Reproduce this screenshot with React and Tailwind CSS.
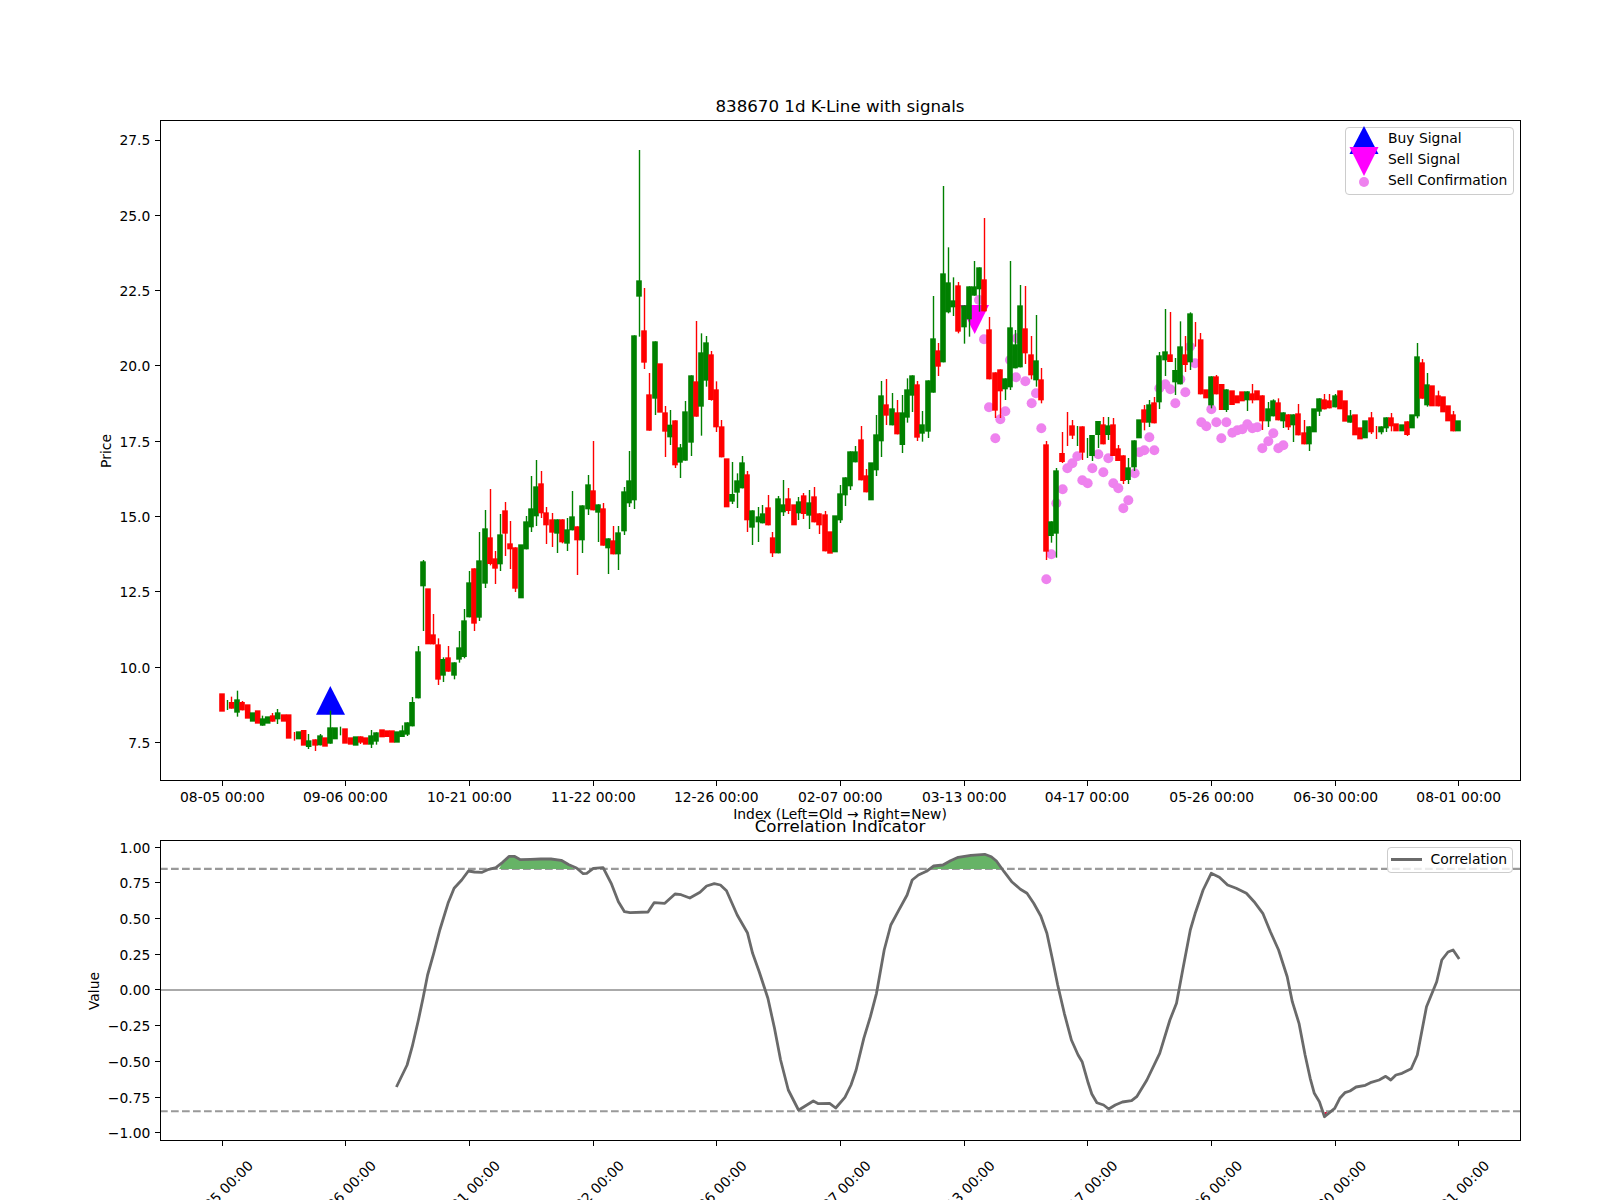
import React from 'react';

// candle rows are read from zoomed crops: [colour, x, bodyTop, bodyBottom, wickTop, wickBottom], in 3x crop pixels
const crops = [
  [200, 440, [
    ['r', 66, 760, 815], ['g', 82, null, null, 780, 810], ['r', 95, 786, 806, 770], ['g', 111, 778, 818, 752, 830],
    ['r', 126, 786, 811, 783], ['r', 143, 793, 836], ['g', 158, 817, 845], ['r', 173, 811, 851],
    ['g', 188, 835, 857, 827], ['g', 203, 829, 851], ['r', 218, 826, 845, 819], ['g', 233, 817, 838, 807, 852],
    ['r', 251, 823, 845], ['r', 266, 823, 896], ['r', 283, null, null, 876, 902], ['g', 296, 874, 898],
    ['r', 311, 870, 917], ['g', 326, 901, 921, 882, 927], ['r', 345, 898, 917, null, 933], ['g', 360, 886, 916, 882],
    ['r', 375, 892, 920], ['g', 390, 862, 911, 812], ['g', 405, 862, 898], ['g', 421, null, null, 860, 886],
    ['r', 435, 865, 911], ['r', 452, 892, 914], ['g', 467, 889, 917], ['r', 482, 889, 908, null, 912],
    ['r', 497, 892, 914], ['g', 513, 886, 914, 870, 924], ['g', 528, 877, 905, null, 914], ['r', 546, 868, 892],
    ['r', 561, 871, 891], ['r', 576, 871, 908], ['g', 591, 874, 908], ['g', 606, 871, 891, 856],
    ['g', 621, 847, 884, null, 888], ['g', 636, 786, 859, 771], ['g', 654, 634, 775, 618], ['g', 669, 364, 439, 360, 573],
    ['r', 684, 445, 613], ['r', 699, 583, 613, 522], ['r', 714, 613, 719, 595, 735], ['g', 729, 657, 707, 652, 726],
    ['r', 744, 652, 695, 618], ['g', 762, 667, 707, null, 718], ['g', 777, 622, 659, 573, 668], ['g', 792, 541, 651, 507, 655],
    ['g', 807, 427, 532, 393], ['r', 822, 385, 551, null, 573], ['g', 837, 361, 533, 276, 543], ['g', 855, 265, 431, 210, 444],
    ['r', 870, 292, 372, 147, 376], ['r', 885, 355, 386, 333, 432],
  ]],
  [420, 400, [
    ['g', 240, 403, 493, 342, 513], ['r', 255, 331, 401, 306, 468], ['r', 270, 430, 448, 363, 507], ['r', 285, 442, 566, null, 576],
    ['g', 303, 433, 595], ['g', 318, 364, 448, 348], ['g', 333, 325, 382, 228, 396], ['g', 348, 259, 349, 180, 378],
    ['r', 363, 250, 340, 213, 354], ['r', 378, 337, 376, 321, 432], ['r', 396, 358, 398, 339, 441], ['g', 411, 358, 401, null, 459],
    ['r', 426, 358, 427, null, 430], ['g', 441, 388, 431, 354, 453], ['g', 456, 349, 391, 273], ['r', 471, 379, 421, null, 525],
    ['g', 486, 316, 421, null, 459], ['g', 504, 253, 328, 225, 345], ['r', 519, 271, 331, 123], ['g', 534, 313, 338, null, 426],
    ['r', 549, 325, 437, 309], ['g', 564, 415, 445, null, 522], ['r', 579, 421, 463, 378], ['g', 594, 397, 463, 378, 510],
    ['g', 612, 274, 394, 261, 405], ['g', 627, 241, 310, 153, 321], ['g', 642, -194, 301, null, 327],
  ]],
  [420, 130, [
    ['g', 657, 451, 500, 60, 620], ['r', 672, 601, 698, 474, 717], ['r', 687, 793, 902, 729], ['g', 705, 634, 806, null, 855],
    ['r', 720, 700, 848], ['r', 735, 847, 905, 828, 981], ['g', 750, 884, 922, 840, 945], ['r', 765, 871, 1006, null, 1014],
    ['g', 780, 952, 998, 942, 1044], ['g', 795, 844, 992, 813], ['g', 813, 736, 938, null, 978], ['r', 828, 754, 860, 573],
    ['g', 843, 667, 830, 610, 917], ['g', 858, 637, 752, 618, 770], ['r', 873, 673, 810, 663, 812], ['r', 888, 778, 892, 754, 906],
  ]],
  [700, 330, [
    ['r', 65, 289, 382, 270], ['r', 80, 385, 532], ['g', 96, 492, 515, 396, 522], ['g', 111, 451, 488, 430, 534],
    ['g', 126, 397, 475, 378], ['r', 141, 433, 571, 423, 606], ['g', 156, 541, 593, null, 645], ['g', 175, 559, 577, 531, 636],
    ['g', 188, 550, 580, 525], ['r', 204, 532, 586, 495], ['r', 218, 622, 670, 606, 681], ['g', 234, 505, 670, 498],
    ['g', 249, 523, 547, 450, 558], ['r', 264, 505, 543, 474, 552], ['r', 282, 523, 586], ['g', 296, 514, 550, 501, 570],
    ['r', 311, 496, 552, 489, 567], ['g', 327, 517, 557, 480, 597], ['r', 342, 499, 577, 471], ['r', 357, 550, 586, null, 612],
    ['r', 375, 553, 664, 543], ['r', 390, 604, 671], ['g', 405, 556, 667], ['g', 420, 490, 571, 465, 579],
    ['g', 435, 442, 496, null, 528], ['g', 450, 364, 469, null, 480], ['g', 465, 364, 397, 348], ['r', 483, 328, 451, 288],
    ['r', 498, 436, 487, 417], ['g', 513, 397, 511], ['g', 528, 313, 421, 255, 438], ['g', 543, 196, 334, 153, 381],
    ['r', 558, 223, 257, 147, 285], ['g', 576, 235, 286, 189], ['r', 591, 247, 313, 210],
  ]],
  [900, 170, [
    ['g', 7, 727, 825, 675, 849], ['g', 21, 658, 743, 625, 758], ['g', 36, 616, 677, null, 726], ['r', 51, 643, 803, 633, 813],
    ['g', 66, 763, 791, 723, 815], ['g', 84, 631, 785, null, 804], ['g', 99, 505, 668, 378], ['r', 114, 541, 590, 519, 618],
    ['g', 129, 310, 577, 48], ['g', 144, 337, 427, 232, 430], ['g', 159, 391, 412, 322, 438], ['r', 174, 346, 485, 336, 490],
    ['g', 192, 406, 472, null, 521], ['g', 207, 349, 448, null, 500], ['g', 222, 349, 377, 273], ['g', 237, 292, 358, null, 425],
    ['r', 252, 328, 424, 144], ['r', 267, 478, 628, 441], ['r', 285, 607, 722, null, 744], ['r', 300, 598, 664, null, 744],
    ['g', 315, 625, 658, null, 690], ['g', 330, 472, 652, 273, 660], ['g', 345, 523, 595, 480], ['g', 360, 406, 592, 345],
    ['r', 375, 475, 550, 348, 582], ['r', 393, 553, 616, 498, 628], ['g', 408, 571, 631, 435, 650], ['r', 423, 628, 691, 594, 700],
  ]],
  [1020, 280, [
    ['r', 78, 493, 815, 483, 840], ['g', 93, 724, 768, null, 788], ['g', 108, 571, 761, 564, 833], ['r', 126, 519, 546, 456, 549],
    ['r', 142, null, null, 396, 498], ['r', 156, 436, 467, 420, 477], ['g', 171, null, null, 438, 498], ['r', 186, 439, 518, null, 540],
    ['g', 202, null, null, 474, 534], ['g', 216, 465, 528, null, 543], ['g', 234, 423, 465, null, 504], ['r', 249, 433, 493, 411],
    ['g', 264, 436, 465, 411, 480], ['r', 279, 433, 528, 414], ['r', 294, 505, 543, 495], ['r', 309, 526, 603, null, 612],
    ['g', 324, 562, 600, 534, 612], ['g', 342, 481, 562, null, 573], ['g', 357, 418, 475], ['r', 372, 388, 428, 375, 451],
    ['g', 387, 373, 428, 360, 441], ['r', 402, 367, 430, 351], ['g', 417, 226, 367, 216, 387], ['g', 435, 214, 241, 87, 288],
    ['r', 450, 223, 246, 96], ['g', 465, 270, 307, 234, 345], ['g', 480, 199, 313, 124], ['r', 495, 223, 255, 168, 276],
    ['g', 510, 100, 247, 97, 270], ['r', 525, null, null, 126, 200], ['r', 542, 178, 343, 159], ['r', 558, 328, 355],
    ['g', 573, 289, 376, null, 385], ['r', 588, 289, 343, 285],
  ]],
  [1220, 110, [
    ['r', 5, 822, 900], ['g', 18, 838, 900, null, 906], ['r', 36, 841, 885], ['r', 51, 856, 880], ['r', 66, 844, 874],
    ['g', 81, 844, 871, null, 903], ['r', 96, 850, 871, 822, 880], ['r', 111, 841, 871], ['r', 126, 856, 934, null, 960],
    ['g', 144, 895, 934, 876, 951], ['g', 159, 871, 919, 868], ['r', 174, 877, 931, 865], ['g', 189, 907, 934, null, 954],
    ['r', 204, 913, 952, null, 960], ['g', 219, 913, 946, null, 996], ['r', 234, 910, 976, 882], ['r', 252, 967, 1003, 930],
    ['g', 267, 949, 1003, null, 1023], ['g', 282, 895, 967], ['g', 297, 865, 905, null, 918], ['r', 312, 868, 898, 852],
    ['r', 327, 871, 895, 852], ['g', 345, 856, 892, 852], ['r', 360, 841, 898], ['r', 375, 871, 935], ['g', 390, 916, 938, 900],
    ['r', 405, 913, 976], ['r', 420, 952, 988], ['g', 435, 931, 985], ['r', 453, 922, 967, 906, 972],
    ['r', 468, null, null, 948, 987], ['g', 483, 949, 967, null, 973], ['g', 498, 922, 955, null, 966], ['r', 513, 922, 949, 909, 964],
    ['r', 528, 940, 964], ['g', 546, 943, 964], ['r', 561, 934, 975, null, 978], ['g', 576, 913, 955], ['g', 591, 739, 919, 699, 925],
    ['r', 606, 757, 866, 747], ['g', 621, 823, 886, 789, 890], ['r', 636, 826, 889], ['r', 654, 856, 889, 842], ['r', 669, 859, 907],
    ['r', 684, 886, 934], ['r', 699, 913, 964, 903], ['g', 714, 931, 964],
  ]],
];

const candles = crops.flatMap(([ox, oy, rows]) =>
  rows.map(([c, x, top, bottom, wickTop, wickBottom]) => ({
    color: c === 'r' ? '#ff0000' : '#008000',
    x: ox + x / 3,
    top: top == null ? null : oy + top / 3,
    bottom: bottom == null ? null : oy + bottom / 3,
    wickTop: wickTop == null ? null : oy + wickTop / 3,
    wickBottom: wickBottom == null ? null : oy + wickBottom / 3,
  }))
);

const confirmCrops = [
  [900, 170, [
    [237, 390], [252, 508], [267, 712], [301, 748], [286, 805], [316, 724], [330, 570], [350, 505], [348, 622], [376, 634],
    [395, 700], [408, 670], [424, 775],
  ]],
  [1020, 280, [
    [79, 898], [94, 823], [109, 670], [128, 628], [142, 565], [157, 550], [172, 529], [187, 601], [203, 610], [217, 565],
    [235, 523], [250, 577], [265, 535], [280, 610], [295, 625], [310, 685], [325, 661], [344, 580], [358, 517], [373, 511],
    [388, 472], [403, 511], [418, 325], [436, 313], [451, 328], [466, 370], [481, 298], [496, 337], [510, 200], [525, 250],
    [544, 427], [559, 439], [574, 388], [589, 427], [604, 475], [619, 427], [637, 458], [652, 451], [667, 448], [682, 433],
    [697, 445], [712, 442],
  ]],
  [1220, 110, [[127, 1015], [145, 994], [160, 970], [175, 1015], [190, 1006]]],
];
const confirms = confirmCrops.flatMap(([ox, oy, rows]) => rows.map(([x, y]) => [ox + x / 3, oy + y / 3]));

const fromLeft = (x, y) => [x / 1.96, 780 + y / 3];
const fromRight = (x, y) => [800 + x / 1.96, 780 + y / 3];
const toPoints = (list) => list.map(([x, y]) => `${x.toFixed(1)},${y.toFixed(1)}`).join(' ');
const snap = (v) => Math.floor(v) + 0.5;

const corrLeft = [
  [777, 921], [798, 855], [808, 800], [820, 720], [829, 655], [838, 585], [850, 520], [862, 450], [878, 370], [890, 325],
  [905, 300], [918, 273], [930, 276], [945, 277], [958, 268], [972, 263], [985, 247], [998, 229], [1008, 229], [1020, 239],
  [1040, 238], [1060, 237], [1080, 237], [1100, 241], [1115, 254], [1130, 264], [1143, 281], [1150, 280], [1163, 265],
  [1182, 263], [1198, 310], [1212, 365], [1224, 395], [1235, 398], [1270, 396], [1282, 368], [1303, 370], [1323, 342],
  [1335, 344], [1352, 354], [1372, 337], [1385, 318], [1400, 311], [1412, 315], [1424, 332], [1445, 405], [1465, 458],
  [1475, 520], [1488, 575], [1505, 655], [1518, 745], [1530, 840], [1545, 930], [1565, 990],
];
const corrRight = [
  [0, 988], [26, 963], [36, 971], [58, 970], [70, 984], [88, 952], [100, 915], [110, 870], [125, 775], [138, 710], [150, 640],
  [165, 510], [178, 435], [192, 395], [210, 345], [220, 300], [232, 285], [248, 274], [262, 258], [280, 255], [295, 242],
  [310, 232], [335, 226], [362, 223], [375, 230], [385, 243], [400, 275], [415, 305], [432, 328], [445, 340], [458, 370],
  [472, 408], [484, 460], [495, 540], [505, 615], [518, 700], [532, 780], [545, 825], [553, 845], [565, 910], [572, 942],
  [582, 968], [595, 975], [605, 987], [618, 975], [632, 966], [650, 962], [660, 950], [680, 900], [705, 820], [725, 720],
  [738, 670], [750, 570], [765, 450], [775, 398], [790, 330], [806, 280], [822, 292], [838, 315], [855, 325], [875, 340],
  [890, 365], [907, 400], [922, 455], [938, 510], [955, 590], [965, 665], [978, 730], [990, 825], [1000, 895], [1008, 940],
  [1018, 965], [1028, 1010], [1048, 985], [1058, 955], [1068, 938], [1078, 933], [1090, 921], [1108, 916], [1118, 908],
  [1135, 900], [1148, 889], [1158, 900], [1168, 885], [1180, 880], [1198, 866], [1210, 825], [1228, 680], [1248, 605],
  [1258, 540], [1270, 516], [1280, 510], [1292, 537],
];
const corrLine = [...corrLeft.map(([x, y]) => fromLeft(x, y)), ...corrRight.map(([x, y]) => fromRight(x, y))];

const fillOne = [[978, 267], [985, 247], [998, 229], [1008, 229], [1020, 239], [1040, 238], [1060, 237], [1080, 237], [1100, 241], [1115, 254], [1125, 267]].map(([x, y]) => fromLeft(x, y));
const fillTwo = [[250, 267], [262, 258], [280, 255], [295, 242], [310, 232], [335, 226], [362, 223], [375, 230], [385, 243], [395, 267]].map(([x, y]) => fromRight(x, y));

const xTicks = [
  [222.4, '08-05 00:00'], [345.4, '09-06 00:00'], [469.4, '10-21 00:00'], [593.4, '11-22 00:00'], [716.3, '12-26 00:00'],
  [840.3, '02-07 00:00'], [964.3, '03-13 00:00'], [1087, '04-17 00:00'], [1211.7, '05-26 00:00'], [1335.7, '06-30 00:00'], [1458.7, '08-01 00:00'],
];
const priceTicks = ['27.5', '25.0', '22.5', '20.0', '17.5', '15.0', '12.5', '10.0', '7.5'];
const corrTicks = ['1.00', '0.75', '0.50', '0.25', '0.00', '−0.25', '−0.50', '−0.75', '−1.00'];

const Tick = ({ x1, x2, y1, y2 }) => <line x1={x1} x2={x2} y1={y1} y2={y2} stroke="#000" strokeWidth="1" shapeRendering="crispEdges" />;

const PriceChart = () => (
  <svg width="1600" height="840" viewBox="0 0 1600 840" className="block shrink-0">
    <text x="840" y="111.7" textAnchor="middle" className="text-[16.67px]">838670 1d K-Line with signals</text>
    <polygon points="316,714.7 345,714.7 330.3,686" fill="#0000ff" />
    <polygon points="960,305 989,305 974.7,334" fill="#ff00ff" />
    {confirms.map(([x, y], i) => (
      <circle key={i} cx={x} cy={y} r="5" fill="#ee82ee" />
    ))}
    {candles.map((c, i) => (
      <g key={i} fill={c.color}>
        {(c.wickTop != null || c.wickBottom != null) && (
          <rect
            x={snap(c.x) - 0.7}
            width="1.4"
            y={c.wickTop ?? c.top}
            height={(c.wickBottom ?? c.bottom) - (c.wickTop ?? c.top)}
          />
        )}
        {c.top != null && <rect x={c.x - 2.8} width="5.6" y={c.top} height={c.bottom - c.top} />}
      </g>
    ))}
    <rect x="160.5" y="120.5" width="1360" height="660" fill="none" stroke="#000" strokeWidth="1" shapeRendering="crispEdges" />
    {priceTicks.map((t, i) => {
      const y = 140 + i * 75.3;
      return (
        <g key={t}>
          <Tick x1="155" x2="160" y1={snap(y)} y2={snap(y)} />
          <text x="150.3" y={y + 5.4} textAnchor="end">{t}</text>
        </g>
      );
    })}
    {xTicks.map(([x, t]) => (
      <g key={t}>
        <Tick x1={snap(x)} x2={snap(x)} y1="781" y2="786" />
        <text x={x} y="802" textAnchor="middle">{t}</text>
      </g>
    ))}
    <text x="840" y="819" textAnchor="middle">Index (Left=Old → Right=New)</text>
    <text transform="translate(111 451) rotate(-90)" textAnchor="middle">Price</text>
  </svg>
);

const CorrelationChart = () => (
  <svg width="1600" height="360" viewBox="0 840 1600 360" className="block shrink-0 overflow-visible">
    <text x="840" y="831.7" textAnchor="middle" className="text-[16.67px]">Correlation Indicator</text>
    <line x1="160" x2="1520" y1="990" y2="990" stroke="#aaaaaa" strokeWidth="2.1" />
    <line x1="160" x2="1520" y1="868.9" y2="868.9" stroke="#999999" strokeWidth="2.08" strokeDasharray="7.7 3.3" />
    <line x1="160" x2="1520" y1="1111.2" y2="1111.2" stroke="#999999" strokeWidth="2.08" strokeDasharray="7.7 3.3" />
    <polygon points={toPoints(fillOne)} fill="#66b366" />
    <polygon points={toPoints(fillTwo)} fill="#66b366" />
    <polygon points="1324.4,1112 1327,1112 1325.4,1116" fill="#e0103a" />
    <polyline points={toPoints(corrLine)} fill="none" stroke="#6a6a6a" strokeWidth="2.8" strokeLinejoin="round" />
    <rect x="160.5" y="840.5" width="1360" height="300" fill="none" stroke="#000" strokeWidth="1" shapeRendering="crispEdges" />
    {corrTicks.map((t, i) => {
      const y = 847.1 + i * 35.72;
      return (
        <g key={t}>
          <Tick x1="155" x2="160" y1={snap(y)} y2={snap(y)} />
          <text x="150.3" y={y + 5.4} textAnchor="end">{t}</text>
        </g>
      );
    })}
    {xTicks.map(([x, t]) => (
      <g key={t}>
        <Tick x1={snap(x)} x2={snap(x)} y1="1141" y2="1146" />
        <text transform={`translate(${x - 2} 1193) rotate(-45)`} y="5" textAnchor="middle">{t}</text>
      </g>
    ))}
    <text transform="translate(99 991) rotate(-90)" textAnchor="middle">Value</text>
  </svg>
);

const App = () => (
  <div className="relative flex h-[1200px] w-[1600px] flex-col overflow-hidden bg-white font-['DejaVu_Sans',sans-serif] text-[13.89px] text-black">
    <PriceChart />
    <CorrelationChart />

    <div className="absolute left-[1344.5px] top-[126.5px] flex h-[68px] w-[169.5px] flex-col rounded-[4px] border border-[#cccccc] bg-white/80 pl-[42.5px] pt-[0.5px] leading-[20.8px]">
      <svg width="30" height="60" viewBox="0 0 30 60" className="absolute left-[3px] top-[-1.5px] overflow-visible">
        <polygon points="0.5,28 29.5,28 15,0" fill="#0000ff" />
        <polygon points="0.5,21 29.5,21 15,50" fill="#ff00ff" />
        <circle cx="15" cy="56" r="5" fill="#ee82ee" />
      </svg>
      <span>Buy Signal</span>
      <span>Sell Signal</span>
      <span>Sell Confirmation</span>
    </div>

    <div className="absolute left-[1386.5px] top-[847px] flex h-[26px] w-[126.5px] items-center gap-[9px] rounded-[4px] border border-[#cccccc] bg-white/80 pb-[2px] pl-[3px]">
      <span className="h-[3px] w-[31px] bg-[#6a6a6a]" />
      <span>Correlation</span>
    </div>
  </div>
);

export default App;
